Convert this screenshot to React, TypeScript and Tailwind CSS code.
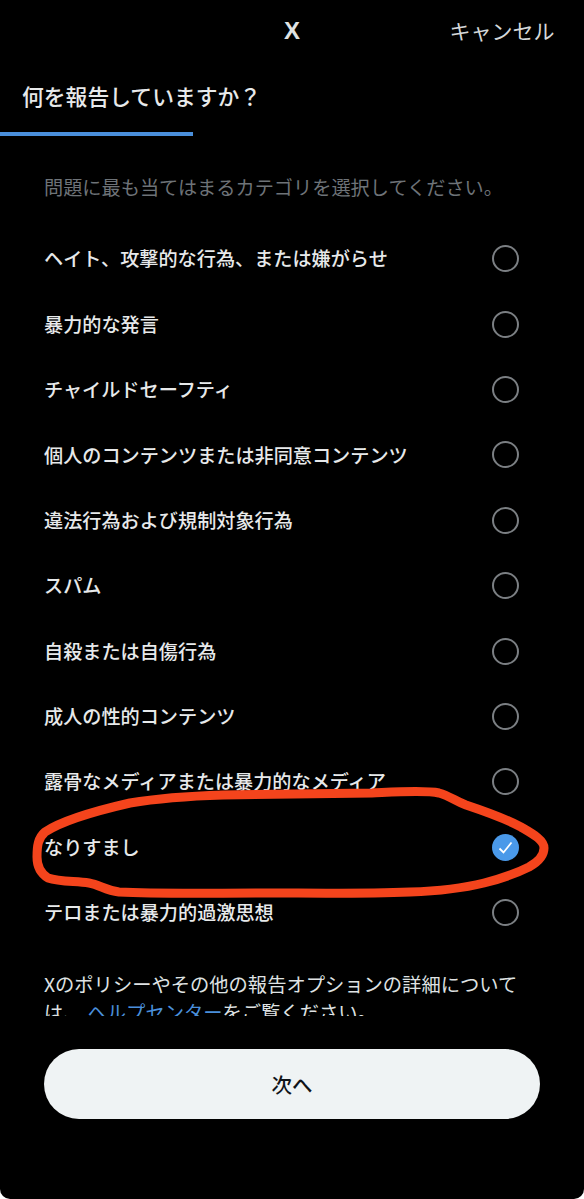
const options = [
    "ヘイト、攻撃的な行為、または嫌がらせ",
    "暴力的な発言",
    "チャイルドセーフティ",
    "個人のコンテンツまたは非同意コンテンツ",
    "違法行為および規制対象行為",
    "スパム",
    "自殺または自傷行為",
    "成人の性的コンテンツ",
    "露骨なメディアまたは暴力的なメディア",
    "なりすまし",
    "テロまたは暴力的過激思想",
]

const selected = "なりすまし"

function Radio({ checked }: { checked: boolean }) {
    if (checked) {
        return (
            <div className="w-[27px] h-[27px] rounded-full bg-[#4a99e9] flex items-center justify-center">
                <svg width="15" height="15" viewBox="0 0 15 15" fill="none">
                    <path d="M1.5 8.5 L5.5 12.5 L13.5 2.5" stroke="white" strokeWidth="1.8" />
                </svg>
            </div>
        )
    }
    return <div className="w-[27px] h-[27px] rounded-full border-[2.5px] border-[#7b7f83]" />
}

export default function App() {
    return (
        <div className="relative w-[584px] h-[1199px] bg-black rounded-b-[10px] overflow-hidden text-[#e7e9ea] font-['Noto_Sans_CJK_JP','Noto_Sans',sans-serif]">
            <header className="h-[62px] pt-[14px] flex items-start justify-between">
                <div className="w-[292px] flex justify-end">
                    <span className="translate-x-[8px] text-[24px] leading-[34px] font-bold text-[#dfe2e3] font-['Liberation_Sans',sans-serif]">X</span>
                </div>
                <button className="mr-[29.5px] text-[21px] leading-[32px] text-[#d5d8da]">キャンセル</button>
            </header>

            <h1 className="pl-[22px] text-[21.8px] leading-[68px] h-[70px] font-medium">何を報告していますか？</h1>
            <div className="w-[193px] h-[4px] bg-[#4a8fdb]" />

            <p className="mt-[34px] pl-[44px] h-[36px] text-[19.2px] leading-[34px] text-[#6e7378] whitespace-nowrap">問題に最も当てはまるカテゴリを選択してください。</p>

            <ul className="mt-[20px]">
                {options.map((label) => (
                    <li key={label} className="h-[65.4px] pl-[44px] pr-[65.5px] flex items-center justify-between">
                        <span className="text-[19.15px] font-medium whitespace-nowrap">{label}</span>
                        <Radio checked={label === selected} />
                    </li>
                ))}
            </ul>

            <div className="mt-[24.5px] mx-[44px] h-[46.1px] overflow-hidden text-[19.3px] leading-[28px] text-[#dfe2e3]">
                <p>
                    Xのポリシーやその他の報告オプションの詳細については、
                    <a className="ml-[5px] text-[#4a8fdb]">ヘルプセンター</a>をご覧ください。
                </p>
            </div>

            <div className="mt-[33px] mx-[44px]">
                <button className="w-full h-[70px] rounded-full bg-[#eff3f4] text-[#0f1419] text-[20.5px] font-medium">次へ</button>
            </div>

            {/* hand drawn marker round the selected row */}
            <svg className="absolute left-0 top-0 pointer-events-none" width="584" height="1199" fill="none">
                <path
                    d="M372 793 C395 792 425 790 439 793 C450 796 455 801 466 805 C490 813 508 820 521 827 C533 834 544 840 544 848 C544 856 538 862 529 867 C515 874 500 879 484 883 C460 889 440 891 410 892 C360 894 310 893 261 893 C210 893 160 894 119 892 C105 890 100 885 89 883 C75 881 60 882 48 878 C40 873 37 866 37 857 C37 846 38 838 45 832 C60 822 95 811 130 803 C160 798 190 796 223 795 C280 794 330 794 372 793 Z"
                    stroke="#f4441c"
                    strokeWidth="9"
                />
            </svg>
        </div>
    )
}
